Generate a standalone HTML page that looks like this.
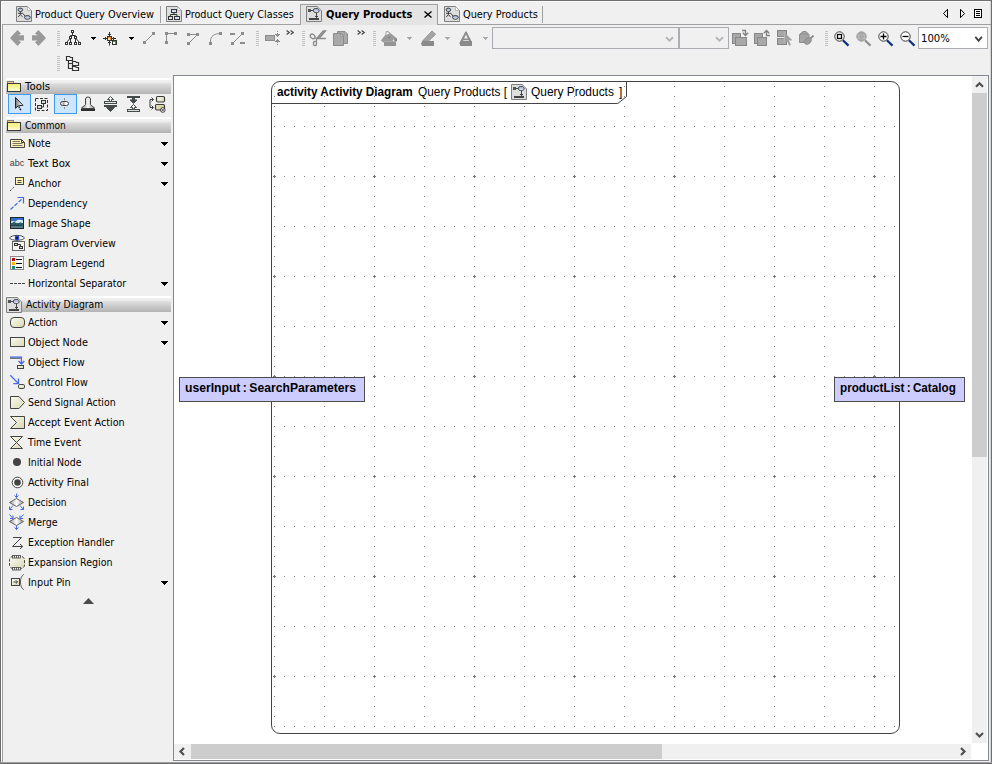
<!DOCTYPE html><html lang="en"><head><meta charset="utf-8"><title>Query Products - Activity Diagram</title><style>

html,body{margin:0;padding:0}
body{width:992px;height:764px;overflow:hidden;background:#f0f0f0;position:relative;font-family:"Liberation Sans",sans-serif}
div{position:absolute;box-sizing:border-box}
.t{position:absolute;white-space:pre;line-height:16px;height:16px;transform-origin:0 50%;display:block;font-family:"DejaVu Sans","Liberation Sans",sans-serif}
.a{font-family:"Liberation Sans",sans-serif}
svg{position:absolute;left:0;top:0}

</style></head><body>
<div style="left:0px;top:0px;width:992px;height:1px;background:#727272"></div>
<div style="left:0px;top:1px;width:992px;height:1px;background:#fafafa"></div>
<div style="left:0px;top:0px;width:1px;height:764px;background:#6e6e6e"></div>
<div style="left:1px;top:1px;width:1px;height:761px;background:#fbfbfb"></div>
<div style="left:991px;top:0px;width:1px;height:764px;background:#6e6e6e"></div>
<div style="left:990px;top:1px;width:1px;height:761px;background:#d4d4d4"></div>
<div style="left:0px;top:762px;width:992px;height:1px;background:#a0a0a0"></div>
<div style="left:0px;top:763px;width:992px;height:1px;background:#6a6a6a"></div>
<div style="left:2px;top:24px;width:1px;height:738px;background:#a0a0a0"></div>
<div style="left:2px;top:24px;width:989px;height:1px;background:#a0a0a0"></div>
<div style="left:300px;top:4px;width:138px;height:21px;background:#e4e4e4;border:1px solid #a0a0a0;border-bottom:none"></div>
<div style="left:160px;top:6px;width:1px;height:17px;background:#a0a0a0"></div>
<div style="left:542px;top:6px;width:1px;height:17px;background:#a0a0a0"></div>
<div style="left:492px;top:27px;width:187px;height:22px;background:#f0f0f0;border:1px solid #abadb3"></div>
<div style="left:679px;top:27px;width:50px;height:22px;background:#f0f0f0;border:1px solid #abadb3"></div>
<div style="left:918px;top:27px;width:70px;height:22px;background:#fff;border:1px solid #abadb3"></div>
<div style="left:6px;top:78px;width:165px;height:16px;background:linear-gradient(#fff 0,#fff 2px,#f1f1f1 2px,#ececec 4.5px,#dcdcdc 6px,#c8c8c8 11px,#b3b3b3 16px)"></div>
<div style="left:6px;top:117px;width:165px;height:16px;background:linear-gradient(#fff 0,#fff 2px,#f1f1f1 2px,#ececec 4.5px,#dcdcdc 6px,#c8c8c8 11px,#b3b3b3 16px)"></div>
<div style="left:6px;top:296px;width:165px;height:16px;background:linear-gradient(#fff 0,#fff 2px,#f1f1f1 2px,#ececec 4.5px,#dcdcdc 6px,#c8c8c8 11px,#b3b3b3 16px)"></div>
<div style="left:8px;top:94px;width:23px;height:20px;background:#cde5ff;border:1px solid #3d9bf5"></div>
<div style="left:54px;top:94px;width:23px;height:20px;background:#cde5ff;border:1px solid #3d9bf5"></div>
<div style="left:173px;top:75px;width:816px;height:686px;background:#fff;border:1px solid #828790"></div>
<div style="left:271px;top:81px;width:629px;height:653px;border:1px solid #444;border-radius:9px;background:#fff"></div>
<svg width="992" height="764" viewBox="0 0 992 764"><defs><pattern id="grid" x="269" y="171" width="100" height="100" patternUnits="userSpaceOnUse"><g fill="#858585" shape-rendering="crispEdges"><rect x="5" y="5" width="1" height="1"/><rect x="5" y="55" width="1" height="1"/><rect x="15" y="5" width="1" height="1"/><rect x="15" y="55" width="1" height="1"/><rect x="25" y="5" width="1" height="1"/><rect x="25" y="55" width="1" height="1"/><rect x="35" y="5" width="1" height="1"/><rect x="35" y="55" width="1" height="1"/><rect x="45" y="5" width="1" height="1"/><rect x="45" y="55" width="1" height="1"/><rect x="55" y="5" width="1" height="1"/><rect x="55" y="55" width="1" height="1"/><rect x="65" y="5" width="1" height="1"/><rect x="65" y="55" width="1" height="1"/><rect x="75" y="5" width="1" height="1"/><rect x="75" y="55" width="1" height="1"/><rect x="85" y="5" width="1" height="1"/><rect x="85" y="55" width="1" height="1"/><rect x="95" y="5" width="1" height="1"/><rect x="95" y="55" width="1" height="1"/><rect x="5" y="15" width="1" height="1"/><rect x="55" y="15" width="1" height="1"/><rect x="5" y="25" width="1" height="1"/><rect x="55" y="25" width="1" height="1"/><rect x="5" y="35" width="1" height="1"/><rect x="55" y="35" width="1" height="1"/><rect x="5" y="45" width="1" height="1"/><rect x="55" y="45" width="1" height="1"/><rect x="5" y="65" width="1" height="1"/><rect x="55" y="65" width="1" height="1"/><rect x="5" y="75" width="1" height="1"/><rect x="55" y="75" width="1" height="1"/><rect x="5" y="85" width="1" height="1"/><rect x="55" y="85" width="1" height="1"/><rect x="5" y="95" width="1" height="1"/><rect x="55" y="95" width="1" height="1"/><rect x="4" y="5" width="3" height="1" fill="#7a7a7a"/><rect x="5" y="4" width="1" height="3" fill="#7a7a7a"/></g></pattern><clipPath id="fc"><rect x="272" y="82" width="627" height="651" rx="8"/></clipPath></defs><rect x="272" y="82" width="627" height="651" fill="url(#grid)" clip-path="url(#fc)"/><path d="M272 103.500H617.800L626.500 96.500V82" fill="none" stroke="#444" stroke-width="1"/></svg>
<div style="left:972px;top:76px;width:15px;height:667px;background:#f0f0f0"></div>
<div style="left:972px;top:93px;width:15px;height:364px;background:#cdcdcd"></div>
<div style="left:174px;top:744px;width:797px;height:15px;background:#f0f0f0"></div>
<div style="left:191px;top:744px;width:471px;height:15px;background:#cdcdcd"></div>
<div style="left:179px;top:377px;width:186px;height:25px;background:#ccccff;border:1px solid #4d4d4d"></div>
<div style="left:834px;top:377px;width:131px;height:25px;background:#ccccff;border:1px solid #4d4d4d"></div>
<svg width="992" height="764" viewBox="0 0 992 764">
<defs>
<linearGradient id="olive" x1="0" y1="0" x2="1" y2="1"><stop offset="0" stop-color="#fbfbf2"/><stop offset="1" stop-color="#d8d8b2"/></linearGradient>
<linearGradient id="dia" x1="0" y1="0" x2="1" y2="0"><stop offset="0" stop-color="#9a9a9a"/><stop offset=".5" stop-color="#ffffff"/><stop offset="1" stop-color="#9a9a9a"/></linearGradient>
<linearGradient id="fold" x1="0" y1="0" x2="0" y2="1"><stop offset="0" stop-color="#f3ee78"/><stop offset=".5" stop-color="#f8f49c"/><stop offset="1" stop-color="#fffde4"/></linearGradient>
<linearGradient id="bub" x1="0" y1="0" x2="0" y2="1"><stop offset="0" stop-color="#8fa6d8"/><stop offset="1" stop-color="#e8eefc"/></linearGradient>
<linearGradient id="olive2" x1="0" y1="0" x2="1" y2="1"><stop offset="0" stop-color="#e8e6c0"/><stop offset="1" stop-color="#c9c690"/></linearGradient>
<linearGradient id="ptr" x1="0" y1="0" x2="1" y2="0"><stop offset="0" stop-color="#6e6e6e"/><stop offset=".8" stop-color="#ffffff"/></linearGradient>
<linearGradient id="pill" x1="0" y1="0" x2="1" y2="0"><stop offset="0" stop-color="#ffffff"/><stop offset=".45" stop-color="#9e9e9e"/><stop offset=".55" stop-color="#ffffff"/><stop offset="1" stop-color="#f4f4f4"/></linearGradient>
<linearGradient id="stampg" x1="0" y1="0" x2="1" y2="0"><stop offset="0" stop-color="#8c8c8c"/><stop offset=".5" stop-color="#f6f6f6"/><stop offset="1" stop-color="#8c8c8c"/></linearGradient>
</defs>
<g fill="#c3c3c3" shape-rendering="crispEdges"><rect x="57" y="31" width="3" height="1" fill="#c3c3c3"/><rect x="57" y="33" width="3" height="1" fill="#c3c3c3"/><rect x="57" y="35" width="3" height="1" fill="#c3c3c3"/><rect x="57" y="37" width="3" height="1" fill="#c3c3c3"/><rect x="57" y="39" width="3" height="1" fill="#c3c3c3"/><rect x="57" y="41" width="3" height="1" fill="#c3c3c3"/><rect x="57" y="43" width="3" height="1" fill="#c3c3c3"/><rect x="57" y="45" width="3" height="1" fill="#c3c3c3"/></g>
<g fill="#c3c3c3" shape-rendering="crispEdges"><rect x="256" y="31" width="3" height="1" fill="#c3c3c3"/><rect x="256" y="33" width="3" height="1" fill="#c3c3c3"/><rect x="256" y="35" width="3" height="1" fill="#c3c3c3"/><rect x="256" y="37" width="3" height="1" fill="#c3c3c3"/><rect x="256" y="39" width="3" height="1" fill="#c3c3c3"/><rect x="256" y="41" width="3" height="1" fill="#c3c3c3"/><rect x="256" y="43" width="3" height="1" fill="#c3c3c3"/><rect x="256" y="45" width="3" height="1" fill="#c3c3c3"/></g>
<g fill="#c3c3c3" shape-rendering="crispEdges"><rect x="302" y="31" width="3" height="1" fill="#c3c3c3"/><rect x="302" y="33" width="3" height="1" fill="#c3c3c3"/><rect x="302" y="35" width="3" height="1" fill="#c3c3c3"/><rect x="302" y="37" width="3" height="1" fill="#c3c3c3"/><rect x="302" y="39" width="3" height="1" fill="#c3c3c3"/><rect x="302" y="41" width="3" height="1" fill="#c3c3c3"/><rect x="302" y="43" width="3" height="1" fill="#c3c3c3"/><rect x="302" y="45" width="3" height="1" fill="#c3c3c3"/></g>
<g fill="#c3c3c3" shape-rendering="crispEdges"><rect x="373" y="31" width="3" height="1" fill="#c3c3c3"/><rect x="373" y="33" width="3" height="1" fill="#c3c3c3"/><rect x="373" y="35" width="3" height="1" fill="#c3c3c3"/><rect x="373" y="37" width="3" height="1" fill="#c3c3c3"/><rect x="373" y="39" width="3" height="1" fill="#c3c3c3"/><rect x="373" y="41" width="3" height="1" fill="#c3c3c3"/><rect x="373" y="43" width="3" height="1" fill="#c3c3c3"/><rect x="373" y="45" width="3" height="1" fill="#c3c3c3"/></g>
<g fill="#c3c3c3" shape-rendering="crispEdges"><rect x="825" y="31" width="3" height="1" fill="#c3c3c3"/><rect x="825" y="33" width="3" height="1" fill="#c3c3c3"/><rect x="825" y="35" width="3" height="1" fill="#c3c3c3"/><rect x="825" y="37" width="3" height="1" fill="#c3c3c3"/><rect x="825" y="39" width="3" height="1" fill="#c3c3c3"/><rect x="825" y="41" width="3" height="1" fill="#c3c3c3"/><rect x="825" y="43" width="3" height="1" fill="#c3c3c3"/><rect x="825" y="45" width="3" height="1" fill="#c3c3c3"/></g>
<g fill="#c3c3c3" shape-rendering="crispEdges"><rect x="57" y="56" width="3" height="1" fill="#c3c3c3"/><rect x="57" y="58" width="3" height="1" fill="#c3c3c3"/><rect x="57" y="60" width="3" height="1" fill="#c3c3c3"/><rect x="57" y="62" width="3" height="1" fill="#c3c3c3"/><rect x="57" y="64" width="3" height="1" fill="#c3c3c3"/><rect x="57" y="66" width="3" height="1" fill="#c3c3c3"/><rect x="57" y="68" width="3" height="1" fill="#c3c3c3"/><rect x="57" y="70" width="3" height="1" fill="#c3c3c3"/></g>
<g shape-rendering="crispEdges"><rect x="91" y="37" width="5" height="1" fill="#000"/><rect x="92" y="38" width="3" height="1" fill="#000"/><rect x="93" y="39" width="1" height="1" fill="#000"/></g>
<g shape-rendering="crispEdges"><rect x="129" y="37" width="5" height="1" fill="#000"/><rect x="130" y="38" width="3" height="1" fill="#000"/><rect x="131" y="39" width="1" height="1" fill="#000"/></g>
<g shape-rendering="crispEdges"><rect x="407" y="37" width="5" height="1" fill="#a9a9a9"/><rect x="408" y="38" width="3" height="1" fill="#a9a9a9"/><rect x="409" y="39" width="1" height="1" fill="#a9a9a9"/></g>
<g shape-rendering="crispEdges"><rect x="445" y="37" width="5" height="1" fill="#a9a9a9"/><rect x="446" y="38" width="3" height="1" fill="#a9a9a9"/><rect x="447" y="39" width="1" height="1" fill="#a9a9a9"/></g>
<g shape-rendering="crispEdges"><rect x="483" y="37" width="5" height="1" fill="#a9a9a9"/><rect x="484" y="38" width="3" height="1" fill="#a9a9a9"/><rect x="485" y="39" width="1" height="1" fill="#a9a9a9"/></g>
<g shape-rendering="crispEdges"><rect x="161" y="142" width="7" height="1" fill="#000"/><rect x="162" y="143" width="5" height="1" fill="#000"/><rect x="163" y="144" width="3" height="1" fill="#000"/><rect x="164" y="145" width="1" height="1" fill="#000"/></g>
<g shape-rendering="crispEdges"><rect x="161" y="162" width="7" height="1" fill="#000"/><rect x="162" y="163" width="5" height="1" fill="#000"/><rect x="163" y="164" width="3" height="1" fill="#000"/><rect x="164" y="165" width="1" height="1" fill="#000"/></g>
<g shape-rendering="crispEdges"><rect x="161" y="182" width="7" height="1" fill="#000"/><rect x="162" y="183" width="5" height="1" fill="#000"/><rect x="163" y="184" width="3" height="1" fill="#000"/><rect x="164" y="185" width="1" height="1" fill="#000"/></g>
<g shape-rendering="crispEdges"><rect x="161" y="282" width="7" height="1" fill="#000"/><rect x="162" y="283" width="5" height="1" fill="#000"/><rect x="163" y="284" width="3" height="1" fill="#000"/><rect x="164" y="285" width="1" height="1" fill="#000"/></g>
<g shape-rendering="crispEdges"><rect x="161" y="321" width="7" height="1" fill="#000"/><rect x="162" y="322" width="5" height="1" fill="#000"/><rect x="163" y="323" width="3" height="1" fill="#000"/><rect x="164" y="324" width="1" height="1" fill="#000"/></g>
<g shape-rendering="crispEdges"><rect x="161" y="341" width="7" height="1" fill="#000"/><rect x="162" y="342" width="5" height="1" fill="#000"/><rect x="163" y="343" width="3" height="1" fill="#000"/><rect x="164" y="344" width="1" height="1" fill="#000"/></g>
<g shape-rendering="crispEdges"><rect x="161" y="581" width="7" height="1" fill="#000"/><rect x="162" y="582" width="5" height="1" fill="#000"/><rect x="163" y="583" width="3" height="1" fill="#000"/><rect x="164" y="584" width="1" height="1" fill="#000"/></g>
<path d="M83 604H94L88.5 598z" fill="#4a4a4a"/>
<path d="M666.0 37.25L669.5 40.75L673.0 37.25" fill="none" stroke="#b4b4b4" stroke-width="1.8"/>
<path d="M716.0 37.25L719.5 40.75L723.0 37.25" fill="none" stroke="#b4b4b4" stroke-width="1.8"/>
<path d="M975.300 36.900L978.600 40.700L981.900 36.900" fill="none" stroke="#444" stroke-width="1.900"/>
<path d="M976 86.700L979.500 83.200L983 86.700" fill="none" stroke="#505050" stroke-width="2.2"/>
<path d="M976 733L979.5 736.5L983 733" fill="none" stroke="#505050" stroke-width="2.2"/>
<path d="M184 748L180.5 751.5L184 755" fill="none" stroke="#505050" stroke-width="2.2"/>
<path d="M961 748L964.5 751.5L961 755" fill="none" stroke="#505050" stroke-width="2.2"/>
<path d="M286.6 30.600L289.2 32.500L286.6 34.400M290.6 30.600L293.2 32.500L290.6 34.400" fill="none" stroke="#4c4c4c" stroke-width="1.300"/>
<path d="M357.6 30.600L360.2 32.500L357.6 34.400M361.6 30.600L364.2 32.500L361.6 34.400" fill="none" stroke="#4c4c4c" stroke-width="1.300"/>
<path d="M947.500 9.300L943.500 13.500L947.500 17.700z" fill="none" stroke="#000" stroke-width="1"/>
<path d="M960.500 9.300L964.500 13.500L960.500 17.700z" fill="none" stroke="#000" stroke-width="1"/>
<g shape-rendering="crispEdges"><rect x="974.5" y="9.5" width="7" height="8" fill="#fff" stroke="#000"/><rect x="976" y="11" width="4" height="1" fill="#000"/><rect x="976" y="13" width="4" height="1" fill="#000"/><rect x="976" y="15" width="4" height="1" fill="#000"/></g>
<path d="M424.5 11.5L431.5 17.5M431.5 11.5L424.5 17.5" stroke="#000" stroke-width="1.4"/>
<g transform="translate(16 6)"><path d="M.5 .5H11.5L15.5 4.5V15.5H.5z" fill="#dedede" stroke="#7f7f7f"/><path d="M11.5 .5V4.5H15.5z" fill="#fff" stroke="#9a9a9a" stroke-width=".6"/><ellipse cx="4.4" cy="3.8" rx="2.3" ry="1.7" fill="url(#bub)" stroke="#333" stroke-width=".9"/><path d="M4.4 5.5V8.6M2 7.3H6.8M4.4 8.6L2.2 11M4.4 8.6L6.4 10.8M6.8 7.3L9.5 10.6" fill="none" stroke="#333" stroke-width=".9"/><ellipse cx="11.4" cy="11.4" rx="2.9" ry="1.9" fill="url(#bub)" stroke="#333" stroke-width=".9"/></g>
<g transform="translate(166 6)"><path d="M.5 .5H11.5L15.5 4.5V15.5H.5z" fill="#dedede" stroke="#7f7f7f"/><path d="M11.5 .5V4.5H15.5z" fill="#fff" stroke="#9a9a9a" stroke-width=".6"/><path d="M7.9 6.5V8.5M4.4 10.5V8.5H10.9V10.5" fill="none" stroke="#333"/><rect x="5.5" y="3.5" width="5" height="3" fill="#d4e0fa" stroke="#333"/><rect x="2.5" y="10.5" width="4" height="3" fill="#d4e0fa" stroke="#333"/><rect x="8.5" y="10.5" width="5" height="3" fill="#d4e0fa" stroke="#333"/></g>
<g transform="translate(306 6)"><path d="M.5 .5H11.5L15.5 4.5V15.5H.5z" fill="#dedede" stroke="#7f7f7f"/><path d="M11.5 .5V4.5H15.5z" fill="#fff" stroke="#9a9a9a" stroke-width=".6"/><rect x="2" y="3" width="3" height="3" fill="#555"/><path d="M5 4.5H7.5M10.5 6.5V12M9 10.5H12" fill="none" stroke="#444"/><rect x="7.5" y="2.5" width="5.5" height="4" rx="1.6" fill="url(#bub)" stroke="#444" stroke-width=".9"/><rect x="3" y="12" width="10" height="2" fill="#444"/></g>
<g transform="translate(444 6)"><path d="M.5 .5H11.5L15.5 4.5V15.5H.5z" fill="#dedede" stroke="#7f7f7f"/><path d="M11.5 .5V4.5H15.5z" fill="#fff" stroke="#9a9a9a" stroke-width=".6"/><ellipse cx="4.4" cy="3.8" rx="2.3" ry="1.7" fill="url(#bub)" stroke="#333" stroke-width=".9"/><path d="M4.4 5.5V8.6M2 7.3H6.8M4.4 8.6L2.2 11M4.4 8.6L6.4 10.8M6.8 7.3L9.5 10.6" fill="none" stroke="#333" stroke-width=".9"/><ellipse cx="11.4" cy="11.4" rx="2.9" ry="1.9" fill="url(#bub)" stroke="#333" stroke-width=".9"/></g>
<g transform="translate(6 297)"><path d="M.5 .5H11.5L15.5 4.5V15.5H.5z" fill="#dedede" stroke="#7f7f7f"/><path d="M11.5 .5V4.5H15.5z" fill="#fff" stroke="#9a9a9a" stroke-width=".6"/><rect x="2" y="3" width="3" height="3" fill="#555"/><path d="M5 4.5H7.5M10.5 6.5V12M9 10.5H12" fill="none" stroke="#444"/><rect x="7.5" y="2.5" width="5.5" height="4" rx="1.6" fill="url(#bub)" stroke="#444" stroke-width=".9"/><rect x="3" y="12" width="10" height="2" fill="#444"/></g>
<g transform="translate(511 84)"><path d="M.5 .5H11.5L15.5 4.5V15.5H.5z" fill="#dedede" stroke="#7f7f7f"/><path d="M11.5 .5V4.5H15.5z" fill="#fff" stroke="#9a9a9a" stroke-width=".6"/><rect x="2" y="3" width="3" height="3" fill="#555"/><path d="M5 4.5H7.5M10.5 6.5V12M9 10.5H12" fill="none" stroke="#444"/><rect x="7.5" y="2.5" width="5.5" height="4" rx="1.6" fill="url(#bub)" stroke="#444" stroke-width=".9"/><rect x="3" y="12" width="10" height="2" fill="#444"/></g>
<path d="M10 38L17.5 30L21 33.6L18.6 35.2H24V40.6H18.6L21 42.3L17.5 46z" fill="#999"/>
<path d="M46 38L38.5 30L35 33.6L37.4 35.2H32V40.6H37.4L35 42.3L38.5 46z" fill="#999"/>
<g fill="none" stroke="#333" stroke-width="1"><path d="M72.5 33V35.5M70.5 36.5V35.5H75.5V36.5M70.5 39V42M75.5 39V42M69.5 39L66.5 42.5M76.5 39L79.5 42.5"/><rect x="71.5" y="30.5" width="2" height="2" fill="#fff" stroke="#333"/><rect x="69.5" y="36.5" width="2" height="2" fill="#fff" stroke="#333"/><rect x="74.5" y="36.5" width="2" height="2" fill="#fff" stroke="#333"/><rect x="65.5" y="42.5" width="2" height="2" fill="#fff" stroke="#333"/><rect x="69.5" y="42.5" width="2" height="2" fill="#fff" stroke="#333"/><rect x="74.5" y="42.5" width="2" height="2" fill="#fff" stroke="#333"/><rect x="78.5" y="42.5" width="2" height="2" fill="#fff" stroke="#333"/></g>
<g fill="none" stroke="#333" stroke-width="1"><path d="M109.5 32V36M108 34.5H111M103 38.5H107M105.5 37V40M112 38.5H116M113.5 37V40M109.5 41V45.5M108 42.5H111"/><rect x="107.5" y="36.5" width="4" height="4" fill="#f08a24"/><rect x="108" y="38" width="2" height="2" fill="#ffe9c0" stroke="none"/><rect x="112.5" y="40.5" width="4" height="4" fill="#36a64a"/><rect x="113" y="42" width="2" height="2" fill="#fff" stroke="none"/></g>
<path d="M144.5 42.5L153.5 33.5" stroke="#8c8c8c" fill="none"/><rect x="143.0" y="41.0" width="3" height="3" fill="#8c8c8c"/><rect x="152.0" y="32.0" width="3" height="3" fill="#8c8c8c"/>
<path d="M166.5 42.5V33.5H175.5" stroke="#8c8c8c" fill="none"/><rect x="165.0" y="41.0" width="3" height="3" fill="#8c8c8c"/><rect x="165.0" y="32.0" width="3" height="3" fill="#8c8c8c"/><rect x="174.0" y="32.0" width="3" height="3" fill="#8c8c8c"/>
<path d="M188.5 34.5H197.5L188.5 43.5" stroke="#8c8c8c" fill="none"/><rect x="187.0" y="33.0" width="3" height="3" fill="#8c8c8c"/><rect x="196.0" y="33.0" width="3" height="3" fill="#8c8c8c"/><rect x="187.0" y="42.0" width="3" height="3" fill="#8c8c8c"/>
<path d="M210.5 43.5V41C210.5 36.5 214 33.5 220.5 33.5" stroke="#8c8c8c" fill="none"/><rect x="209.0" y="42.0" width="3" height="3" fill="#8c8c8c"/><rect x="219.0" y="32.0" width="3" height="3" fill="#8c8c8c"/>
<path d="M232.5 43.5L242.5 33.5" stroke="#8c8c8c" fill="none"/><rect x="231.0" y="42.0" width="3" height="3" fill="#8c8c8c"/><rect x="241.0" y="32.0" width="3" height="3" fill="#8c8c8c"/><rect x="230" y="33" width="5" height="2" fill="#8c8c8c"/><rect x="240" y="42" width="5" height="2" fill="#8c8c8c"/>
<rect x="265.5" y="35.5" width="9" height="5" fill="#aaa" stroke="#8c8c8c"/>
<g fill="#8c8c8c" shape-rendering="crispEdges"><rect x="277" y="31" width="1" height="1" fill="#8c8c8c"/><rect x="277" y="33" width="1" height="1" fill="#8c8c8c"/><rect x="275" y="34" width="5" height="1" fill="#8c8c8c"/><rect x="276" y="35" width="3" height="1" fill="#8c8c8c"/><rect x="277" y="36" width="1" height="1" fill="#8c8c8c"/><rect x="277" y="39" width="1" height="1" fill="#8c8c8c"/><rect x="276" y="40" width="3" height="1" fill="#8c8c8c"/><rect x="275" y="41" width="5" height="1" fill="#8c8c8c"/><rect x="277" y="42" width="1" height="1" fill="#8c8c8c"/><rect x="277" y="44" width="1" height="1" fill="#8c8c8c"/></g>
<g fill="none" stroke="#8a8a8a" stroke-width="1.300"><ellipse cx="312.6" cy="36.4" rx="2.6" ry="2" transform="rotate(35 312.6 36.4)"/><rect x="313.5" y="41.5" width="3" height="4" rx="1"/><path d="M314.8 38L316.5 38.5V41.5M316.5 38.5H325.8"/><path d="M317 38.200L323.200 31L325.600 31L319.200 38.400z" fill="#9a9a9a"/></g>
<g stroke="#8c8c8c" fill="#a9a9a9"><path d="M337.500 31.500H345L347.500 34V43.500H337.500z"/><path d="M333.500 33.500H341L343.500 36V45.500H333.500z"/><path d="M344.600 32.200V34.400H346.800M340.600 34.200V36.400H342.800" fill="#d4d4d4" stroke-width=".7"/></g>
<path d="M381 40.400L385.600 34.600V32.600A1.700 1.700 0 0 1 388.600 31.600L397 38.400V41.500H384.500L383.200 42.400z" fill="#9a9a9a"/><path d="M386.400 35V32.800A.9 .9 0 0 1 388 32.300L389.500 33.600z" fill="#f0f0f0"/><circle cx="393.700" cy="40.300" r=".9" fill="#f0f0f0"/><rect x="394.500" y="38.600" width="2.500" height="2.400" fill="#858585"/><circle cx="389.300" cy="37.600" r="1.100" fill="#8a8a8a"/><rect x="384" y="41.500" width="12" height="4.500" fill="#949494"/>
<path d="M422.300 41.300L432 31L435.600 34.200L428.400 41.300z" fill="#a4a4a4" stroke="#8c8c8c" stroke-width=".8"/><path d="M421 43.400L422.600 41H434V46H422z" fill="#8a8a8a"/>
<path d="M465.400 31.600L460.200 41.500H471.600L466.600 31.600zM466 34.600L467.900 38.600H464.100zM463.400 40.200H468.600L469.200 41.500H462.800z" fill="#8c8c8c" fill-rule="evenodd"/><path d="M459.300 43L460.500 41H472V46H460.500z" fill="#8a8a8a"/>
<rect x="732.500" y="33.500" width="8" height="10" fill="#a8a8a8" stroke="#868686"/><rect x="735.500" y="37.500" width="11" height="8" fill="#a8a8a8" stroke="#868686"/><path d="M742 30.500H745.500V35.500M742.800 32.800L745.500 35.500L748.200 32.800" fill="none" stroke="#808080" stroke-width="1.300"/>
<rect x="754.500" y="33.500" width="8" height="10" fill="#a8a8a8" stroke="#868686"/><rect x="757.500" y="37.500" width="9" height="8" fill="#a8a8a8" stroke="#868686"/><path d="M770 35.500H766.500V30.500M763.800 33.200L766.500 30.500L769.200 33.200" fill="none" stroke="#808080" stroke-width="1.300"/>
<rect x="777.500" y="30.500" width="9" height="6" fill="#a8a8a8" stroke="#868686"/><rect x="777.500" y="38.500" width="9" height="6" fill="#a8a8a8" stroke="#868686"/><path d="M784.300 32.300V43.200L787 41.200L789.200 45.800L791 45L788.900 40.600L792.300 40.300z" fill="#a2a2a2"/><path d="M784.300 32.300V43.200" stroke="#c4c4c4" stroke-width=".7"/>
<path d="M799.500 34.500L803 31.500H806L809 34.500V42.500H799.500z" fill="#a6a6a6" stroke="#8e8e8e"/><path d="M800 34.800L804.500 33.500L808.500 34.800" fill="none" stroke="#8e8e8e" stroke-width=".8"/><path d="M810.500 38.500L813.500 35.500" stroke="#8a8a8a" stroke-width="1.800"/><ellipse cx="807.800" cy="41" rx="3.900" ry="2.900" transform="rotate(-40 807.800 41)" fill="#9c9c9c" stroke="#8a8a8a" stroke-width=".8"/>
<path d="M842.9 40.200L848.5 45.600" stroke="#0c2f86" stroke-width="2.200"/><circle cx="839.5" cy="36.500" r="4.700" fill="#fff" stroke="#3a3a3a" stroke-width="1"/><rect x="837.500" y="34.500" width="4" height="4" fill="#fff" stroke="#000" stroke-width="1.300"/>
<path d="M864.9 40.200L870.5 45.600" stroke="#8e8e8e" stroke-width="2.200"/><circle cx="861.5" cy="36.500" r="4.700" fill="#a9a9a9" stroke="#9a9a9a" stroke-width="1"/><text x="861.500" y="39" font-family="Liberation Sans, sans-serif" font-size="6.500" font-weight="bold" fill="#bdbdbd" text-anchor="middle">1:1</text>
<path d="M886.9 40.200L892.5 45.600" stroke="#0c2f86" stroke-width="2.200"/><circle cx="883.5" cy="36.500" r="4.700" fill="#fff" stroke="#3a3a3a" stroke-width="1"/><path d="M880.500 36.500H886.500M883.500 33.500V39.500" stroke="#000" stroke-width="1.300"/>
<path d="M908.9 40.200L914.5 45.600" stroke="#0c2f86" stroke-width="2.200"/><circle cx="905.5" cy="36.500" r="4.700" fill="#fff" stroke="#3a3a3a" stroke-width="1"/><path d="M902.500 36.500H908.500" stroke="#000" stroke-width="1.300"/>
<g fill="#f4f4f4" stroke="#333" stroke-width="1.200"><path d="M68.500 60.500V68.500H72.500M68.500 63.500H72.500" fill="none"/><path d="M66.500 56.500H69.500L70.500 57.500H72.500V60.500H66.500z"/><path d="M72.500 61.500H75.500L76.500 62.500H78.500V65.500H72.500z"/><path d="M72.500 66.500H75.500L76.500 67.500H78.500V70.500H72.500z"/></g>
<g transform="translate(7 81)"><rect x=".5" y=".5" width="6" height="2.500" fill="#f7c473" stroke="#808080"/><rect x=".5" y="2.500" width="13" height="8" fill="url(#fold)" stroke="#3a3a3a"/></g>
<g transform="translate(7 120)"><rect x=".5" y=".5" width="6" height="2.500" fill="#f7c473" stroke="#808080"/><rect x=".5" y="2.500" width="13" height="8" fill="url(#fold)" stroke="#3a3a3a"/></g>
<path d="M15.500 97.500V108.300L18.300 105.800L23 105.300z" fill="url(#ptr)" stroke="#222" stroke-width="1" stroke-linejoin="round"/><path d="M18.800 106.500L21.200 111" stroke="#222" stroke-width="1.500" stroke-dasharray="1.600 .9"/>
<g fill="none" stroke="#333"><rect x="35.500" y="98.500" width="12" height="12" stroke-dasharray="3 1.500"/><rect x="41.500" y="100.500" width="4" height="3" fill="#ddd"/><rect x="37.500" y="105.500" width="4" height="3" fill="#ddd"/><path d="M43.500 103.500V107H41.500" /></g>
<path d="M64.500 98V100.500M64.500 107V109" stroke="#9a8f88" fill="none"/><rect x="60.500" y="101.500" width="8" height="4" rx="2" fill="url(#pill)" stroke="#444"/>
<path d="M85.500 104.500V99A2.500 2 0 0 1 90.500 99V104.500C90.500 106 94.500 106.500 94.500 108.500H81.500C81.500 106.500 85.500 106 85.500 104.500z" fill="url(#stampg)" stroke="#444" stroke-linejoin="round"/><rect x="81" y="109" width="14" height="2" fill="#2e2e2e"/>
<g fill="none" stroke="#454b4b"><rect x="104.500" y="101.500" width="12" height="2" fill="#e4e4e4"/><rect x="104" y="105" width="13" height="2" fill="#454b4b" stroke="none"/><path d="M110.500 96.500L113.500 99.500H111.500V101.500H109.500V99.500H107.500z" fill="#f4f4f4"/><path d="M106.500 107.500H114.500L110.500 111.500z" fill="#454b4b"/></g>
<g fill="none" stroke="#454b4b"><rect x="127" y="96" width="13" height="2" fill="#454b4b" stroke="none"/><path d="M132.500 98V100H130L133.500 103.300L137 100H134.500V98z" fill="#454b4b"/><path d="M133.500 104.500L136.500 107.500H134.500V109H132.500V107.500H130.500z" fill="#f4f4f4"/><rect x="127.500" y="109.500" width="12" height="2" fill="#dcdcdc"/></g>
<g fill="none" stroke="#3c3c3c"><path d="M153 99.500H150V107.500H153M151.500 97.500L153.500 99.500L151.500 101.500M151.500 105.500L153.500 107.500L151.500 109.500"/><rect x="156.500" y="96.500" width="8" height="5.500" rx="1.200" fill="url(#olive)" stroke-width="1.200"/><rect x="155.500" y="104.500" width="9" height="5.500" rx="1.200" fill="url(#olive2)" stroke-width="1.200"/><circle cx="162.800" cy="110" r="2.300" fill="#fff"/><path d="M161.500 110H164M162.800 108.800V111.200" stroke-width=".8"/></g>
<path d="M10.500 139.500H21.500L24.500 142.500V147.500H10.500z" fill="#fdf3b4" stroke="#444"/><path d="M21.500 139.500V142.500H24.500" fill="none" stroke="#444"/><path d="M12.500 141.500H20M12.500 143.500H22.500M12.500 145.500H22.500" fill="none" stroke="#555" stroke-width=".8"/>
<text x="9.800" y="166" font-family="Liberation Sans, sans-serif" font-size="9" fill="#3c3c3c" textLength="14.400" lengthAdjust="spacingAndGlyphs">abc</text>
<rect x="15.500" y="177.500" width="8" height="7" fill="#fdf3b4" stroke="#444"/><path d="M17.500 180.500H21.500M17.500 182.500H21.500" stroke="#444"/><path d="M10 191L15 186" stroke="#444" stroke-dasharray="2 1.500"/>
<path d="M10.500 209.500L22.500 198.500" stroke="#4169ea" stroke-width="1.200" stroke-dasharray="4 1.500" fill="none"/><path d="M17.500 197.500H23.500V203.500" stroke="#4169ea" stroke-width="1.200" fill="none"/>
<rect x="10.500" y="217.500" width="13" height="11" fill="#2f6fd0" stroke="#262626"/><path d="M11 221.500C13 220 14 222 15.500 221.500C17 219.500 20 219 23 220.500V223H11z" fill="#dfeaf8"/><path d="M11 223.500L14 221.800L17.500 223.600L20.500 222.200L23 223.400V228H11z" fill="#2b5f66"/><path d="M11 225.500L16 224.500L23 225.800V228H11z" fill="#1f4348"/><rect x="11" y="226.500" width="12" height="1" fill="#86b6c6"/>
<rect x="12.500" y="241.500" width="12" height="9" fill="#f6f6f6" stroke="#666"/><path d="M9.500 238C12 234.500 22 234.500 24.500 238C22 241 12 241 9.500 238z" fill="#fff" stroke="#444"/><circle cx="17" cy="238" r="2.400" fill="#1e46d2"/><circle cx="17" cy="238" r="1" fill="#111"/><rect x="14.500" y="243.500" width="3" height="2" fill="#ddd" stroke="#333"/><rect x="19.500" y="246.500" width="3" height="2" fill="#ddd" stroke="#333"/><path d="M17.500 244.500H20.500V246.500" fill="none" stroke="#333"/>
<rect x="10.500" y="256.500" width="13" height="13" fill="#f8f8f8" stroke="#8a8a8a"/><rect x="12" y="258" width="3" height="3" fill="#c40000"/><rect x="12" y="262" width="3" height="3" fill="#ffb400"/><rect x="12" y="266" width="3" height="3" fill="#0f9080"/><rect x="16" y="259" width="6" height="1" fill="#111"/><rect x="16" y="263" width="6" height="1" fill="#111"/><rect x="16" y="267" width="6" height="1" fill="#111"/>
<rect x="10" y="283" width="3" height="1" fill="#444"/><rect x="14" y="283" width="3" height="1" fill="#444"/><rect x="18" y="283" width="3" height="1" fill="#444"/><rect x="22" y="283" width="3" height="1" fill="#444"/>
<rect x="10.500" y="317.500" width="14" height="10" rx="3.500" fill="url(#olive)" stroke="#444"/>
<rect x="10.500" y="337.500" width="14" height="9" fill="url(#olive)" stroke="#444"/>
<path d="M10 357.200H21.400V363.500M18.500 361L21.400 364L24.300 361" fill="none" stroke="#4169ea" stroke-width="1.300"/><path d="M10 358.300H20.500" stroke="#333" stroke-width=".8"/><rect x="17.500" y="365.500" width="6" height="3" fill="url(#olive)" stroke="#444"/>
<path d="M10.300 375.300L18.500 383.600M18.500 378.500V383.600H13.300" fill="none" stroke="#4169ea" stroke-width="1.300"/><rect x="18.500" y="384.500" width="6" height="4" rx="1.300" fill="url(#olive)" stroke="#444"/>
<path d="M10.500 396.500H19L24.500 402.500L19 408.500H10.500z" fill="url(#olive)" stroke="#444"/>
<path d="M10.500 416.500H24.500V428.500H10.500L16.500 422.500z" fill="url(#olive)" stroke="#444"/>
<path d="M10.500 436.500H22.500L10.500 448.500H22.500z" fill="url(#olive)" stroke="#444" stroke-linejoin="round"/>
<circle cx="17" cy="462" r="4" fill="#444"/>
<circle cx="17.500" cy="482.500" r="5.300" fill="#fff" stroke="#444"/><circle cx="17.500" cy="482.500" r="3.300" fill="#444"/>
<path d="M9.500 502.500L16.500 498.500L23.500 502.500L16.500 506.500z" fill="url(#dia)" stroke="#555" stroke-width=".9"/><path d="M16.500 493.500V497.500M14.500 495.500L16.500 497.500L18.500 495.500M13 505.500L9.500 509.500M9.500 506.500V509.500H12.500M20 505.500L23.500 509.500M23.500 506.500V509.500H20.500" fill="none" stroke="#4169ea"/>
<path d="M9.500 521.500L16.500 517.500L23.500 521.500L16.500 525.500z" fill="url(#dia)" stroke="#555" stroke-width=".9"/><path d="M9.500 514.500L13 518.500M13 515.500V518.500H10M23.500 514.500L20 518.500M20 515.500V518.500H23M16.500 525.500V529.500M14.500 527.500L16.500 529.500L18.500 527.500" fill="none" stroke="#4169ea"/>
<path d="M13 537.500H21.500L12.500 546.500H22.500M20 544L22.700 546.500L20 549" fill="none" stroke="#444"/>
<rect x="9.500" y="556.500" width="15" height="12" rx="3.500" fill="url(#olive)" stroke="#444" stroke-dasharray="3 1.500"/><g fill="#f4f4e0" stroke="#444" stroke-width=".8"><rect x="12.500" y="555.500" width="8" height="2.500"/><rect x="12.500" y="567.500" width="8" height="2.500"/><path d="M14.500 555.500v2.500M16.500 555.500v2.500M18.500 555.500v2.500M14.500 567.500v2.500M16.500 567.500v2.500M18.500 567.500v2.500"/></g>
<rect x="11.500" y="578.500" width="8" height="7" fill="url(#olive)" stroke="#444"/><path d="M13.500 582H17.500M15.800 580.300L17.500 582L15.800 583.700" fill="none" stroke="#333" stroke-width=".9"/><path d="M23.800 574.300C19.300 577 19.300 587 23.800 589.800" fill="none" stroke="#444" stroke-width=".9"/>
</svg>
<span class="t" style="left:35px;top:7.00px;font-size:11px;transform:scaleX(0.8882);">Product Query Overview</span>
<span class="t" style="left:185px;top:7.00px;font-size:11px;transform:scaleX(0.8792);">Product Query Classes</span>
<span class="t" style="left:326px;top:7.00px;font-size:11px;font-weight:bold;transform:scaleX(0.8996);">Query Products</span>
<span class="t" style="left:463.4px;top:7.00px;font-size:11px;transform:scaleX(0.8859);">Query Products</span>
<span class="t" style="left:921px;top:31.00px;font-size:11px;transform:scaleX(0.9156);">100%</span>
<span class="t" style="left:25.3px;top:79.00px;font-size:11px;transform:scaleX(0.9296);">Tools</span>
<span class="t" style="left:25.4px;top:118.00px;font-size:11px;transform:scaleX(0.8235);">Common</span>
<span class="t" style="left:25.8px;top:297.00px;font-size:11px;transform:scaleX(0.8414);">Activity Diagram</span>
<span class="t" style="left:28.2px;top:136.00px;font-size:11px;transform:scaleX(0.8715);">Note</span>
<span class="t" style="left:28.2px;top:156.00px;font-size:11px;transform:scaleX(0.9220);">Text Box</span>
<span class="t" style="left:28.2px;top:176.00px;font-size:11px;transform:scaleX(0.8561);">Anchor</span>
<span class="t" style="left:28.2px;top:196.00px;font-size:11px;transform:scaleX(0.8592);">Dependency</span>
<span class="t" style="left:28.2px;top:216.00px;font-size:11px;transform:scaleX(0.8646);">Image Shape</span>
<span class="t" style="left:28.2px;top:236.00px;font-size:11px;transform:scaleX(0.8545);">Diagram Overview</span>
<span class="t" style="left:28.2px;top:256.00px;font-size:11px;transform:scaleX(0.8416);">Diagram Legend</span>
<span class="t" style="left:28.2px;top:276.00px;font-size:11px;transform:scaleX(0.8616);">Horizontal Separator</span>
<span class="t" style="left:28.2px;top:315.00px;font-size:11px;transform:scaleX(0.8591);">Action</span>
<span class="t" style="left:28.2px;top:335.00px;font-size:11px;transform:scaleX(0.8805);">Object Node</span>
<span class="t" style="left:28.2px;top:355.00px;font-size:11px;transform:scaleX(0.8815);">Object Flow</span>
<span class="t" style="left:28.2px;top:375.00px;font-size:11px;transform:scaleX(0.8761);">Control Flow</span>
<span class="t" style="left:28.2px;top:395.00px;font-size:11px;transform:scaleX(0.8510);">Send Signal Action</span>
<span class="t" style="left:28.2px;top:415.00px;font-size:11px;transform:scaleX(0.8755);">Accept Event Action</span>
<span class="t" style="left:28.2px;top:435.00px;font-size:11px;transform:scaleX(0.8589);">Time Event</span>
<span class="t" style="left:28.2px;top:455.00px;font-size:11px;transform:scaleX(0.8539);">Initial Node</span>
<span class="t" style="left:28.2px;top:475.00px;font-size:11px;transform:scaleX(0.8686);">Activity Final</span>
<span class="t" style="left:28.2px;top:495.00px;font-size:11px;transform:scaleX(0.8240);">Decision</span>
<span class="t" style="left:28.2px;top:515.00px;font-size:11px;transform:scaleX(0.8619);">Merge</span>
<span class="t" style="left:28.2px;top:535.00px;font-size:11px;transform:scaleX(0.8539);">Exception Handler</span>
<span class="t" style="left:28.2px;top:555.00px;font-size:11px;transform:scaleX(0.8640);">Expansion Region</span>
<span class="t" style="left:28.2px;top:575.00px;font-size:11px;transform:scaleX(0.8801);">Input Pin</span>
<span class="t a" style="left:185.2px;top:380.00px;font-size:12px;font-weight:bold;word-spacing:-0.9px;transform:scaleX(1.0128);">userInput : SearchParameters</span>
<span class="t a" style="left:840.2px;top:380.00px;font-size:12px;font-weight:bold;word-spacing:-0.9px;transform:scaleX(0.9741);">productList : Catalog</span>
<span class="t a" style="left:277.4px;top:84.00px;font-size:12px;font-weight:bold;transform:scaleX(0.9773);">activity Activity Diagram</span>
<span class="t a" style="left:418px;top:84.00px;font-size:12px;transform:scaleX(0.9884);">Query Products [</span>
<span class="t a" style="left:531.4px;top:84.00px;font-size:12px;transform:scaleX(0.9943);">Query Products</span>
<span class="t a" style="left:619px;top:84.00px;font-size:12px;">]</span>
</body></html>
